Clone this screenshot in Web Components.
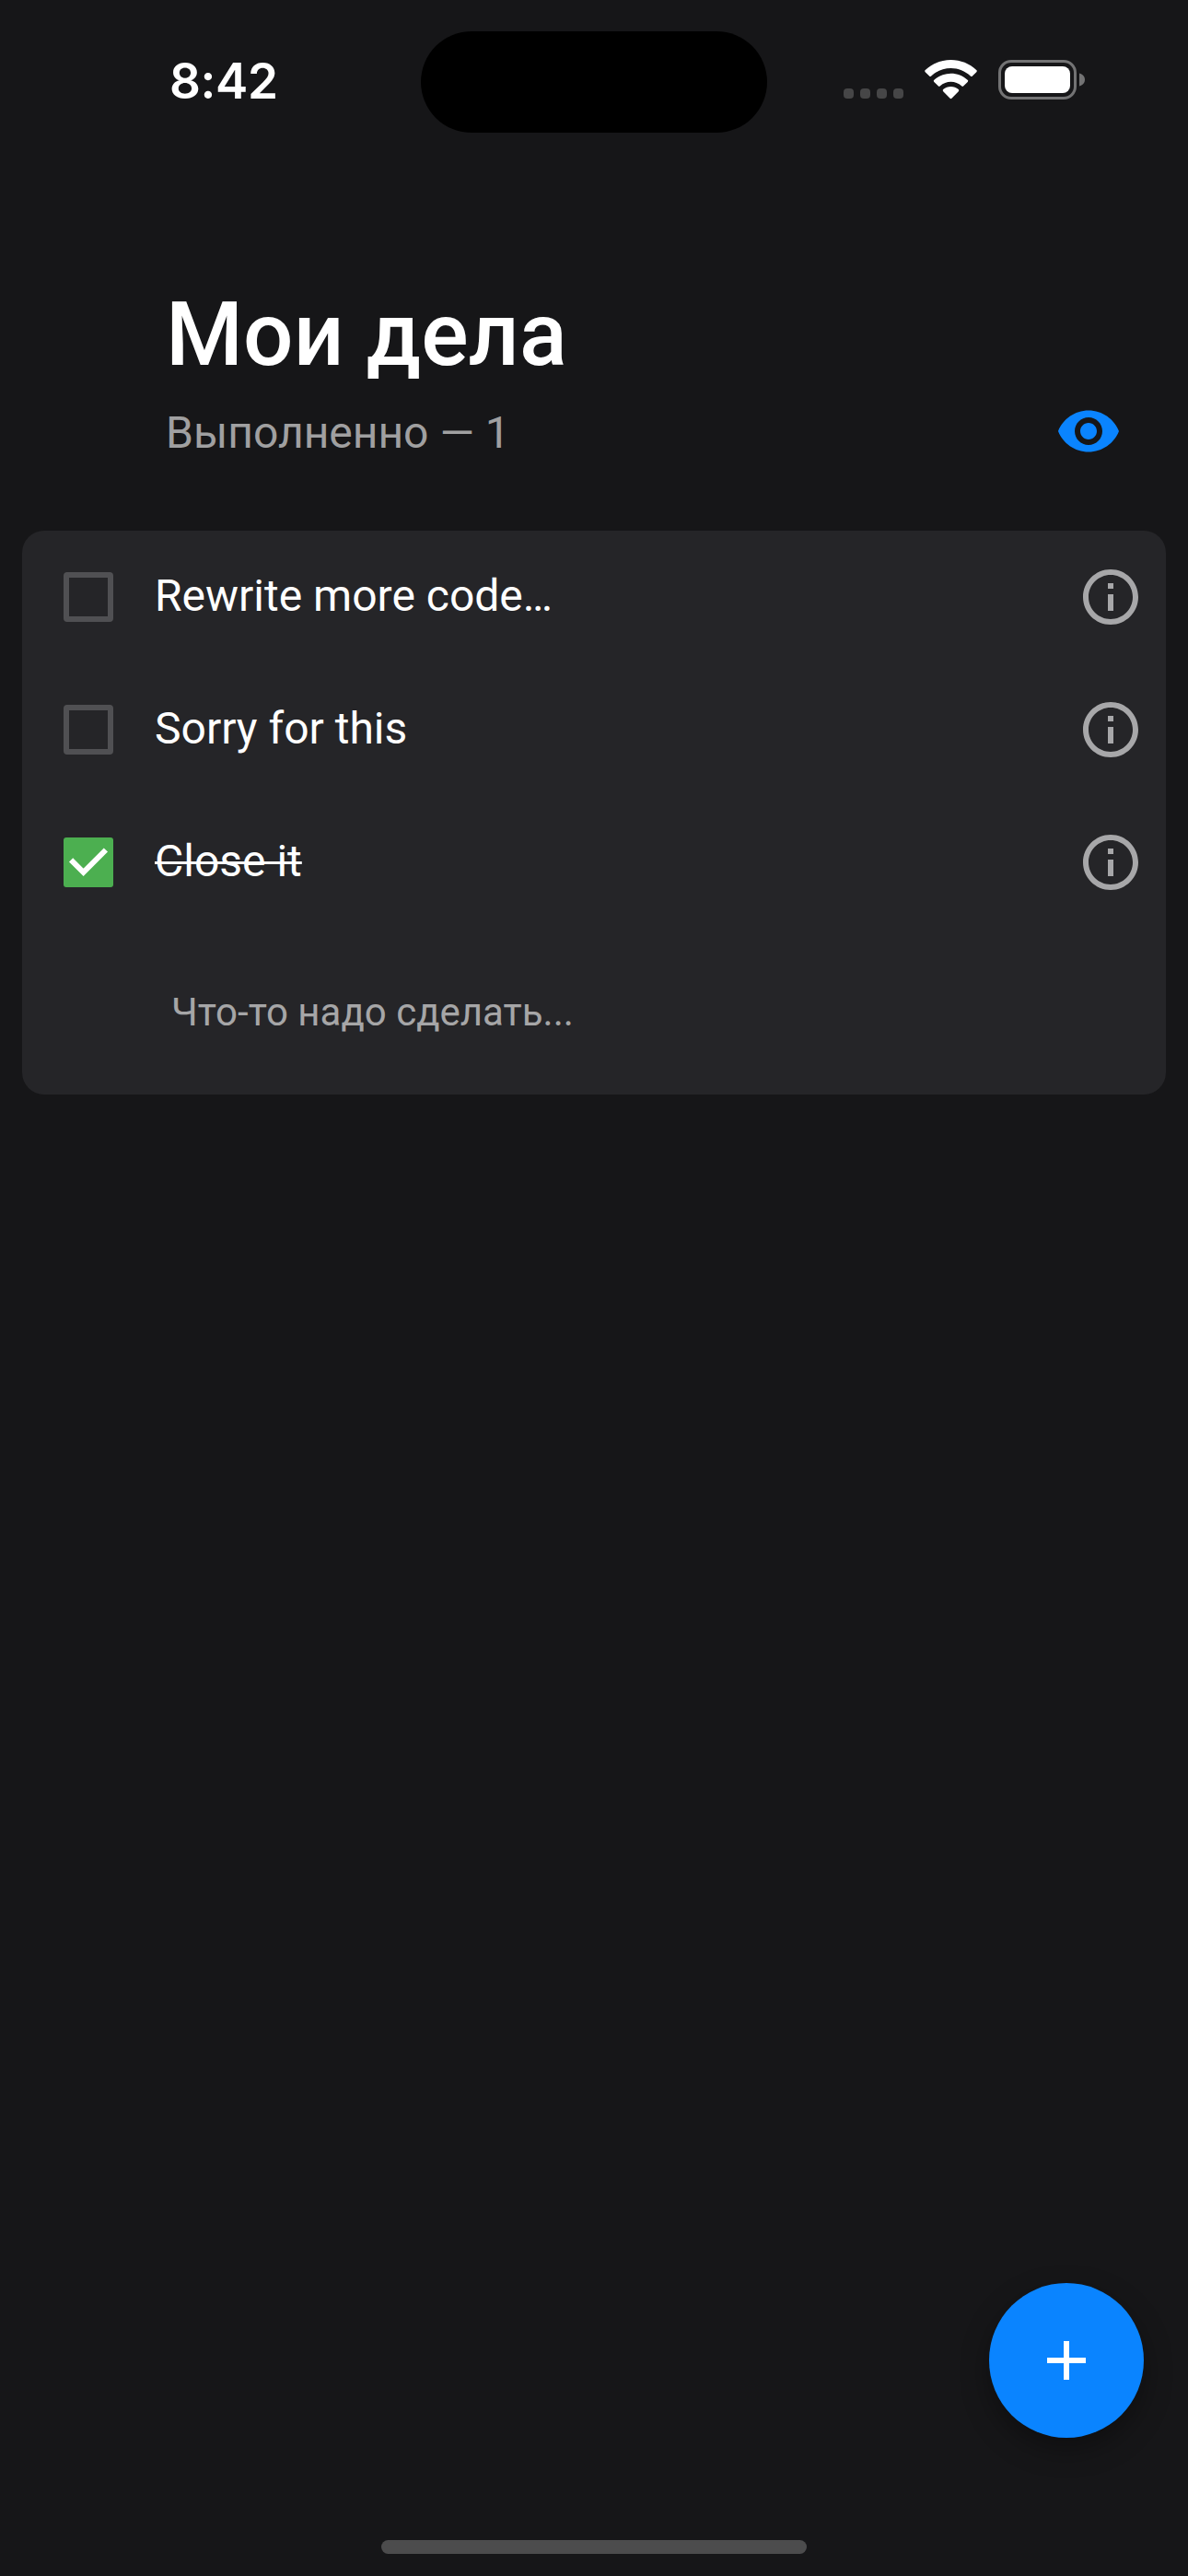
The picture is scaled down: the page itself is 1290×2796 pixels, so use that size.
<!DOCTYPE html>
<html lang="ru">
<head>
<meta charset="utf-8">
<title>Мои дела</title>
<style>
  html, body { margin: 0; height: 100%; background: #161618; }
  body { font-family: Roboto, "Noto Sans", sans-serif; color: #fff; overflow: hidden; }
</style>
</head>
<body>
<todo-app></todo-app>
<script>
const define = (name, html) => {
  const template = document.createElement('template');
  template.innerHTML = html;
  customElements.define(name, class extends HTMLElement {
    constructor() {
      super();
      this.attachShadow({ mode: 'open' }).append(template.content.cloneNode(true));
    }
  });
};

define('status-bar', `
  <style>
    :host { display: grid; grid-template-columns: 457px 376px 1fr; height: 178px; box-sizing: border-box; padding-top: 34px; align-items: start; }
    .time { font: 590 53px/64px Inter, sans-serif; letter-spacing: -0.4px; padding: 22px 0 0 184px; }
    .island { height: 110px; border-radius: 55px; background: #000; }
    .icons { display: flex; align-items: flex-start; padding: 31px 0 0 83px; }
    .dots { display: flex; gap: 7px; padding-top: 31px; }
    .dots i { width: 11px; height: 11px; border-radius: 4px; background: #464647; }
    svg { display: block; }
    .wifi { margin: 0 23px; }
  </style>
  <div class="time">8:42</div>
  <div class="island"></div>
  <div class="icons">
    <div class="dots"><i></i><i></i><i></i><i></i></div>
    <svg class="wifi" width="57" height="43" viewBox="0 0 57 43" fill="#fff">
      <path d="M28.5 0C39 0 48.800 4 56.200 10.900Q57.400 12 56.300 13.200L51.900 17.600Q50.900 18.600 49.800 17.600C44 12 36.500 9 28.500 9S13 12 7.200 17.600Q6.100 18.600 5.100 17.600L.7 13.200Q-.4 12 .8 10.900C8.200 4 18 0 28.500 0Z"/>
      <path d="M28.500 14.700C35.300 14.700 41.700 17.300 46.600 21.700Q47.800 22.800 46.700 23.900L42.300 28.200Q41.300 29.200 40.100 28.200C36.900 25.200 32.800 23.700 28.500 23.700S20.100 25.200 16.900 28.200Q15.700 29.200 14.700 28.200L10.300 23.900Q9.200 22.800 10.400 21.700C15.300 17.300 21.700 14.700 28.500 14.700Z"/>
      <path d="M28.500 29C31.600 29 34.500 30 36.800 32.100Q37.900 33.200 36.800 34.200L29.400 41.700Q28.500 42.600 27.600 41.700L20.200 34.200Q19.100 33.200 20.200 32.100C22.500 30 25.400 29 28.500 29Z"/>
    </svg>
    <svg width="96" height="43" viewBox="0 0 96 43">
      <rect x="1.500" y="1.500" width="82" height="40" rx="12.500" fill="none" stroke="#737374" stroke-width="3"/>
      <rect x="7" y="7" width="71" height="29" rx="8" fill="#fff"/>
      <path d="M88 14.500V28.500C91.500 27.500 94 25 94 21.500S91.500 15.500 88 14.500Z" fill="#737374"/>
    </svg>
  </div>`);

define('list-header', `
  <style>
    :host { display: flex; flex-direction: column; height: 398px; box-sizing: border-box; padding: 129px 72px 0 180px; }
    h1 { margin: 0; font-weight: 500; font-size: 96px; line-height: 112px; letter-spacing: .15px; }
    .row { display: flex; justify-content: space-between; align-items: center; height: 72px; margin-top: 13px; }
    .sub { font-size: 48px; line-height: 57px; color: rgba(255,255,255,.6); padding-top: 3px; }
    svg { display: block; width: 72px; height: 72px; }
  </style>
  <h1><slot name="title"></slot></h1>
  <div class="row">
    <span class="sub"><slot name="subtitle"></slot></span>
    <svg viewBox="0 0 24 24" fill="#0A84FF"><path d="M12 4.500C7 4.500 2.730 7.610 1 12c1.730 4.390 6 7.500 11 7.500s9.270-3.110 11-7.500c-1.730-4.390-6-7.500-11-7.500zM12 17c-2.760 0-5-2.240-5-5s2.240-5 5-5 5 2.240 5 5-2.240 5-5 5zm0-8c-1.660 0-3 1.340-3 3s1.340 3 3 3 3-1.340 3-3-1.340-3-3-3z"/></svg>
  </div>`);

define('todo-item', `
  <style>
    :host { display: flex; align-items: center; height: 144px; box-sizing: border-box; padding: 0 24px 0 45px; }
    .box { width: 54px; height: 54px; flex: none; margin-right: 45px; }
    .label { flex: 1; font-size: 48px; line-height: 57px; padding-bottom: 3px; }
    .on, :host([done]) .off { display: none; }
    :host([done]) .on { display: inline; }
    :host([done]) .label span { text-decoration: line-through; text-decoration-thickness: 3px; }
    .info { width: 72px; height: 72px; flex: none; }
  </style>
  <svg class="box" viewBox="0 0 54 54">
    <rect class="off" x="3" y="3" width="48" height="48" rx="1" fill="none" stroke="rgba(255,255,255,.2)" stroke-width="6"/>
    <g class="on"><rect width="54" height="54" rx="3" fill="#4CAF50"/><path d="M8.100 24.300L21.600 37.800L45.900 13.500" fill="none" stroke="#fff" stroke-width="6"/></g>
  </svg>
  <div class="label"><span><slot></slot></span></div>
  <svg class="info" viewBox="0 0 24 24" fill="rgba(255,255,255,.6)"><path d="M11 7h2v2h-2zm0 4h2v6h-2zm1-9C6.480 2 2 6.480 2 12s4.480 10 10 10 10-4.480 10-10S17.520 2 12 2zm0 18c-4.410 0-8-3.590-8-8s3.590-8 8-8 8 3.590 8 8-3.590 8-8 8z"/></svg>`);

define('new-item', `
  <style>
    :host { display: flex; align-items: center; height: 180px; box-sizing: border-box; padding: 1px 0 0 162px; font-size: 42px; line-height: 49px; color: rgba(255,255,255,.6); }
  </style>
  <span><slot></slot></span>`);

define('todo-card', `
  <style>
    :host { display: flex; flex-direction: column; margin: 0 24px; border-radius: 24px; background: #252528; }
  </style>
  <slot></slot>`);

define('add-button', `
  <style>
    :host { display: flex; align-items: center; justify-content: center; width: 168px; height: 168px; border-radius: 50%; background: #0A84FF;
      box-shadow: 0 12px 30px rgba(0,0,0,.34); }
    svg { width: 72px; height: 72px; }
  </style>
  <svg viewBox="0 0 24 24" fill="#fff"><path d="M19 13h-6v6h-2v-6H5v-2h6V5h2v6h6v2z"/></svg>`);

define('home-indicator', `
  <style>
    :host { display: block; width: 462px; height: 15px; border-radius: 7.500px; background: #4c4c4d; }
  </style>`);

define('todo-app', `
  <style>
    :host { display: flex; flex-direction: column; width: 1290px; height: 2796px; background: #161618; }
    .space { flex: 1; }
    add-button { align-self: flex-end; margin: 0 48px 111px 0; }
    home-indicator { align-self: center; margin-bottom: 24px; }
  </style>
  <status-bar></status-bar>
  <list-header><span slot="title">Мои дела</span><span slot="subtitle">Выполненно — 1</span></list-header>
  <todo-card>
    <todo-item>Rewrite more code…</todo-item>
    <todo-item>Sorry for this</todo-item>
    <todo-item done>Close it</todo-item>
    <new-item>Что-то надо сделать...</new-item>
  </todo-card>
  <div class="space"></div>
  <add-button></add-button>
  <home-indicator></home-indicator>`);
</script>
</body>
</html>
